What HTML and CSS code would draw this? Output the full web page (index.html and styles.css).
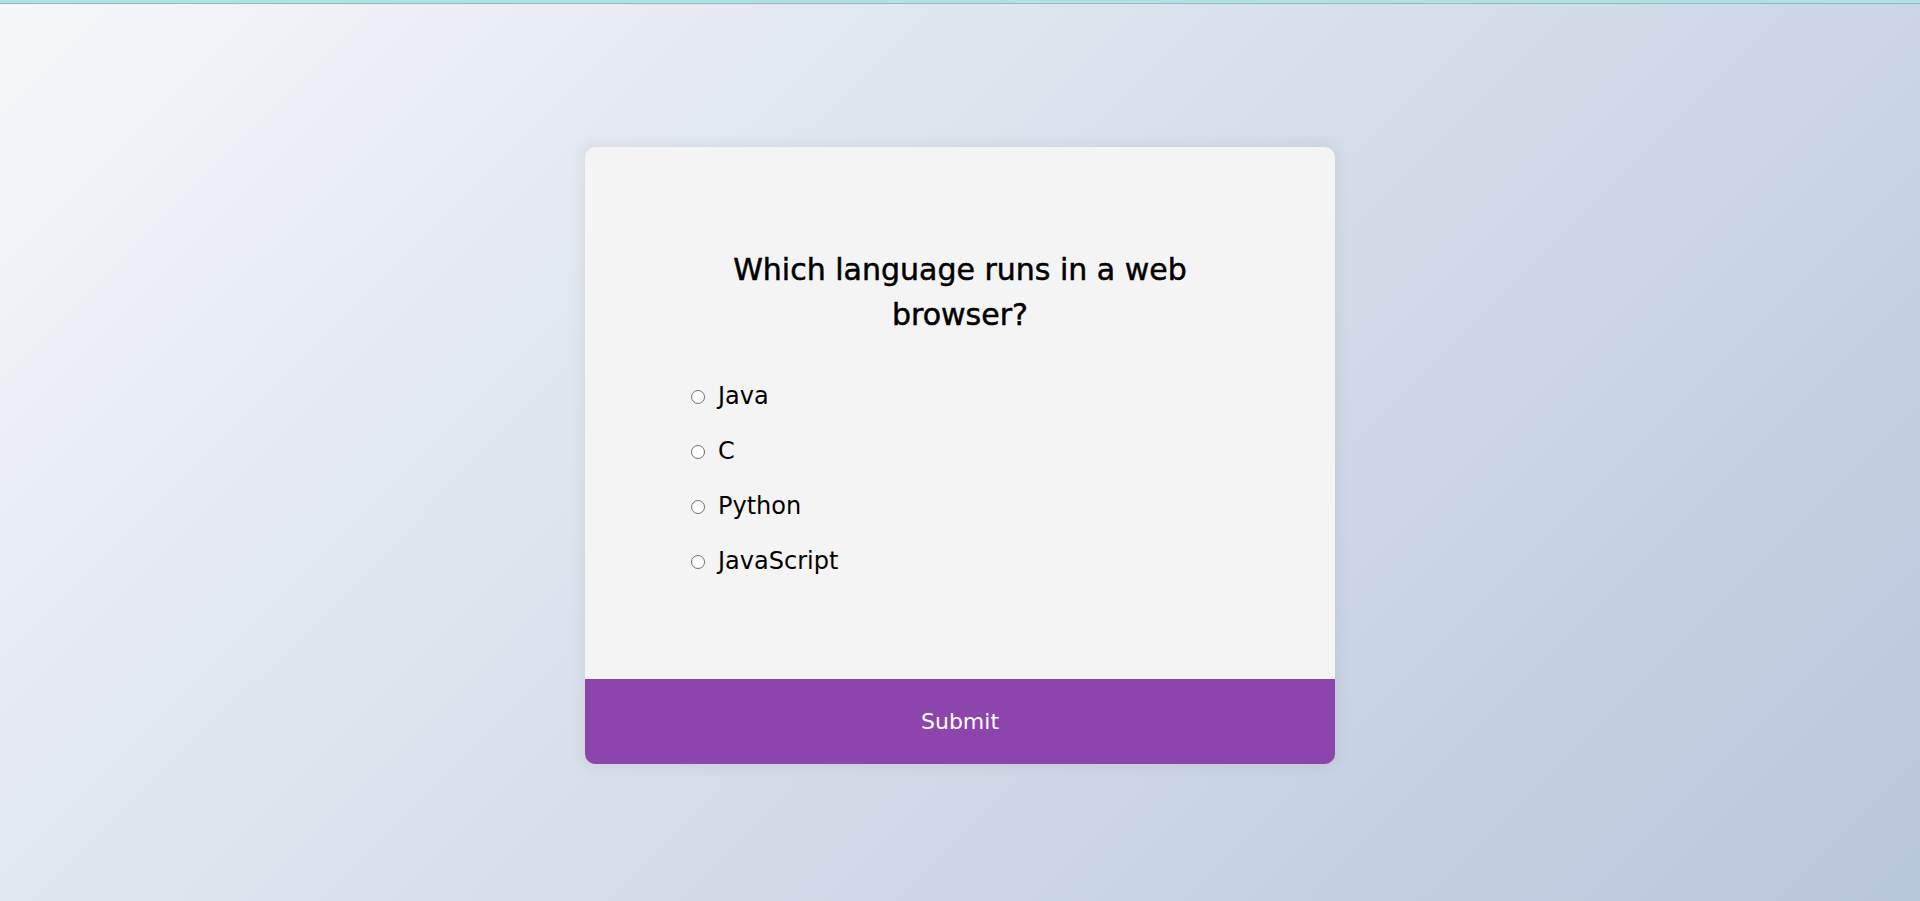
FILE: index.html
```html
<!DOCTYPE html>
<html lang="en">
<head>
<meta charset="UTF-8">
<title>Quiz App</title>
<link rel="stylesheet" href="styles.css">
</head>
<body>
<div class="topbar"></div>
<main class="page">
  <div class="quiz-container">
    <div class="quiz-header">
      <h2 class="question">Which language runs in a web browser?</h2>
      <ul class="answers">
        <li class="answer"><input type="radio" name="answer" id="a" class="radio"><label for="a">Java</label></li>
        <li class="answer"><input type="radio" name="answer" id="b" class="radio"><label for="b">C</label></li>
        <li class="answer"><input type="radio" name="answer" id="c" class="radio"><label for="c">Python</label></li>
        <li class="answer"><input type="radio" name="answer" id="d" class="radio"><label for="d">JavaScript</label></li>
      </ul>
    </div>
    <button class="submit" type="button">Submit</button>
  </div>
</main>
</body>
</html>
```

FILE: styles.css
```css
* {
  box-sizing: border-box;
}

html, body {
  margin: 0;
  height: 100%;
}

body {
  font-family: "DejaVu Sans", "Liberation Sans", sans-serif;
  background-color: #b8c6db;
  background-image: linear-gradient(315deg, #b8c6db 0%, #f5f7fa 100%);
  overflow: hidden;
}

.topbar {
  height: 4px;
  background: #b4dfe1;
  border-bottom: 1px solid #86c3c8;
}

.page {
  display: flex;
  justify-content: center;
  padding-top: 143px;
}

.quiz-container {
  width: 750px;
  background: #f4f4f4;
  border-radius: 10px;
  box-shadow: 0 0 12px 3px rgba(100, 100, 100, 0.1);
  overflow: hidden;
}

.quiz-header {
  padding: 80px;
}

.question {
  margin: 0;
  padding: 20px;
  text-align: center;
  font-size: 30px;
  font-weight: 400;
  line-height: 45px;
  color: #000;
  -webkit-text-stroke: 0.5px #000;
}

.answers {
  list-style: none;
  margin: 22px 0 20px;
  padding: 0 0 0 26px;
}

.answer {
  display: flex;
  align-items: center;
  font-size: 24px;
  line-height: 35px;
  margin: 20px 0;
  color: #000;
}

.answer:first-child {
  margin-top: 0;
}

.answer:last-child {
  margin-bottom: 0;
}

.radio {
  appearance: none;
  -webkit-appearance: none;
  width: 14px;
  height: 14px;
  margin: 0 13px 0 0;
  border: 1px solid #6e6e6e;
  border-radius: 50%;
  background: #fff;
  flex: none;
}

.answer label {
  cursor: pointer;
}

.submit {
  display: block;
  width: 100%;
  border: none;
  background: #8e44ad;
  color: #fff;
  font-family: inherit;
  font-size: 22px;
  line-height: 33px;
  padding: 26px;
  cursor: pointer;
}
```
